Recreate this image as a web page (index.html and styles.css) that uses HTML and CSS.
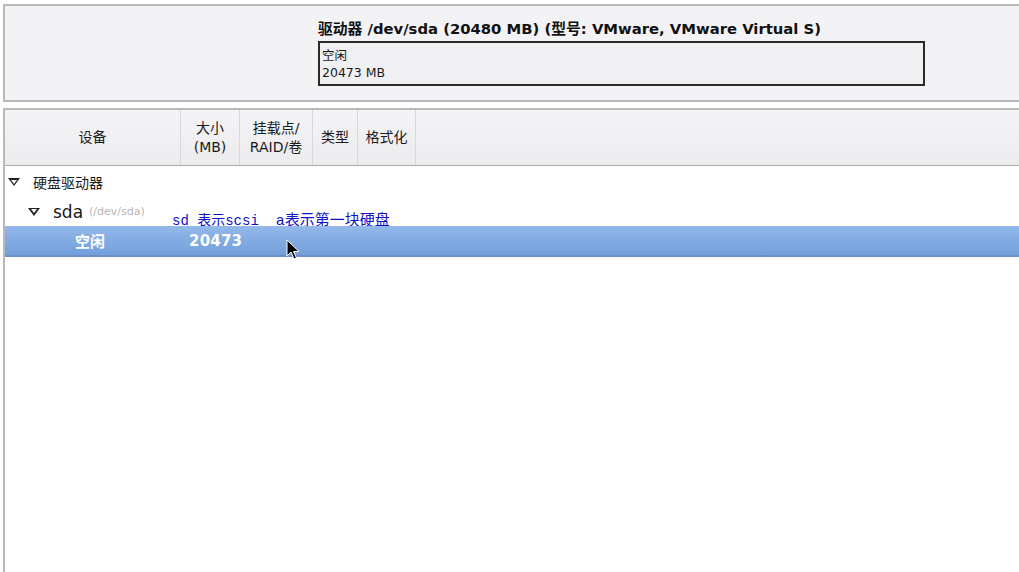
FILE: index.html
```html
<!DOCTYPE html>
<html>
<head>
	<meta charset="utf-8">
	<title>分区</title>
	<link rel="stylesheet" href="styles.css">
</head>
<body>
	<div class="drive-panel">
		<div class="drive-info">
			<div class="drive-title">驱动器 /dev/sda (20480 MB) (型号: VMware, VMware Virtual S)</div>
			<div class="drive-bar">
				<div>空闲</div>
				<div>20473 MB</div>
			</div>
		</div>
	</div>

	<div class="tree-panel">
		<div class="tree-head">
			<div class="col col-dev">设备</div>
			<div class="col col-size">大小<br>(MB)</div>
			<div class="col col-mount">挂载点/<br>RAID/卷</div>
			<div class="col col-type">类型</div>
			<div class="col col-fmt">格式化</div>
			<div class="col col-rest"></div>
		</div>
		<div class="tree-body">
			<div class="row row-group">
				<span class="arrow"></span>
				<span>硬盘驱动器</span>
			</div>
			<div class="row row-disk">
				<span class="arrow"></span>
				<span class="disk-name">sda</span>
				<span class="disk-path">(/dev/sda)</span>
				<span class="note">sd 表示scsi &nbsp;<span class="note-cjk">a表示第一块硬盘</span></span>
			</div>
			<div class="row row-free">
				<span class="cell-dev">空闲</span>
				<span class="cell-size">20473</span>
				<svg class="cursor" width="14" height="22" viewBox="0 0 14 22">
					<path d="M1 1 L1 17 L5 13 L8 20 L10.5 19 L7.5 12.5 L13 12.5 Z" fill="#000" stroke="#fff" stroke-width="1"/>
				</svg>
			</div>
		</div>
	</div>
</body>
</html>
```

FILE: styles.css
```css
body {
	margin: 0;
	padding: 0;
	background-color: #ffffff;
	font-family: "DejaVu Sans", "Noto Sans CJK SC", sans-serif;
	color: #1a1a1a;
}

.drive-panel {
	margin: 4px 0 0 3px;
	height: 94px;
	border-top: 2px solid #b9b8bd;
	border-left: 2px solid #b9b8bd;
	border-bottom: 2px solid #b9b8bd;
	background-color: #f3f2f5;
	padding-left: 313px;
	box-sizing: content-box;
}

.drive-info {
	padding-top: 13px;
}

.drive-title {
	font-size: 14.8px;
	font-weight: bold;
	line-height: 20px;
	color: #111;
}

.drive-bar {
	margin-top: 2px;
	width: 607px;
	height: 45px;
	border: 2px solid #2a2a2a;
	background-color: #f0eff2;
	font-size: 12.5px;
	line-height: 17px;
	padding: 4px 2px 0;
	box-sizing: border-box;
}

.tree-panel {
	margin: 6px 0 0 3px;
	height: 470px;
	border-top: 2px solid #b9b8bd;
	border-left: 2px solid #b9b8bd;
	background-color: #ffffff;
	position: relative;
}

.tree-head {
	display: flex;
	height: 55px;
	border-bottom: 1px solid #a9a9ad;
	background: linear-gradient(#f4f3f6, #ecebee);
	font-size: 14px;
	line-height: 19px;
}

.col {
	display: flex;
	align-items: center;
	justify-content: center;
	text-align: center;
	border-right: 1px solid #d8d7db;
}

.col-dev { width: 175px; }
.col-size { width: 58px; }
.col-mount { width: 72px; }
.col-type { width: 44px; }
.col-fmt { width: 57px; }
.col-rest { flex: 1; border-right: none; }

.tree-body {
	padding-top: 1px;
	font-size: 14px;
}

.row {
	display: flex;
	align-items: center;
	height: 29px;
}

.arrow {
	width: 0;
	height: 0;
	border-left: 6px solid transparent;
	border-right: 6px solid transparent;
	border-top: 8px solid #222;
	position: relative;
	margin-right: 13px;
}

.arrow::after {
	content: "";
	position: absolute;
	left: -3px;
	top: -6.5px;
	border-left: 3px solid transparent;
	border-right: 3px solid transparent;
	border-top: 4px solid #fff;
}

.row-group {
	padding-left: 3px;
	height: 30px;
}

.row-disk {
	padding-left: 23px;
	position: relative;
}

.disk-name {
	font-size: 17px;
	margin-right: 6px;
}

.disk-path {
	font-size: 11px;
	color: #b5b5b5;
}

.note {
	position: absolute;
	left: 167px;
	top: 11px;
	font-family: "Liberation Mono", "Noto Sans CJK SC", monospace;
	font-size: 14px;
	color: #1010c8;
	white-space: nowrap;
}

.note-cjk {
	font-size: 15px;
}

.row-free {
	height: 29px;
	background: linear-gradient(#94b8ea, #86aee4 40%, #729fdb);
	border-bottom: 2px solid #6a90c6;
	color: #ffffff;
	font-size: 15px;
	font-weight: bold;
	position: relative;
}

.cell-dev {
	width: 184px;
	padding-left: 70px;
	box-sizing: border-box;
}

.cell-size {
	letter-spacing: 0.2px;
}

.cursor {
	position: absolute;
	left: 281px;
	top: 13px;
}
```
